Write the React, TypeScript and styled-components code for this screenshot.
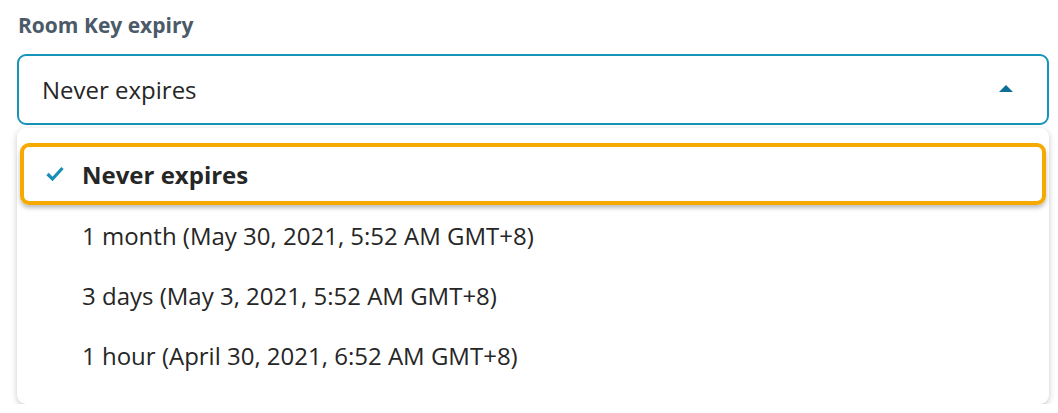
import React from "react";
import styled, { createGlobalStyle } from "styled-components";

const Global = createGlobalStyle`
  html, body { margin: 0; padding: 0; background: #fff; }
  body { font-family: "Open Sans", "Noto Sans", sans-serif; }
`;

const Page = styled.div`
  padding: 11px 9px 0 17px;
`;

const Label = styled.div`
  font-size: 21px;
  line-height: 28px;
  font-weight: 700;
  color: #4b5a68;
  padding-left: 1px;
  margin-bottom: 15px;
`;

const SelectBox = styled.div`
  box-sizing: border-box;
  height: 71px;
  border: 2px solid #1794ba;
  border-radius: 9px;
  display: flex;
  align-items: center;
  justify-content: space-between;
  padding: 0 34px 0 23px;
  font-size: 24px;
  color: #262626;
  background: #fff;
`;

const Caret = styled.span`
  width: 0;
  height: 0;
  border-left: 7px solid transparent;
  border-right: 7px solid transparent;
  border-bottom: 7px solid #0b6f96;
  margin-top: -2px;
`;

const Panel = styled.div`
  position: relative;
  margin-top: 3px;
  background: #fff;
  border-radius: 9px;
  box-shadow: 0 2px 6px rgba(0, 0, 0, 0.22);
  padding: 15px 3px 19px 3px;
`;

const Option = styled.div<{ $active?: boolean }>`
  box-sizing: border-box;
  height: ${(p) => (p.$active ? "62px" : "60px")};
  display: flex;
  align-items: center;
  padding-left: ${(p) => (p.$active ? "22px" : "62px")};
  font-size: 24px;
  color: #262626;
  font-weight: ${(p) => (p.$active ? 700 : 400)};
  border: ${(p) => (p.$active ? "4px solid #f6aa00" : "none")};
  border-radius: 9px;
  box-shadow: ${(p) => (p.$active ? "0 3px 4px rgba(0,0,0,0.25)" : "none")};
`;

const Check = styled.svg`
  width: 18px;
  height: 16px;
  margin-right: 18px;
  flex-shrink: 0;
`;

const options = [
  "1 month (May 30, 2021, 5:52 AM GMT+8)",
  "3 days (May 3, 2021, 5:52 AM GMT+8)",
  "1 hour (April 30, 2021, 6:52 AM GMT+8)",
];

export default function App() {
  return (
    <>
      <Global />
      <Page>
        <Label>Room Key expiry</Label>
        <SelectBox>
          <span>Never expires</span>
          <Caret />
        </SelectBox>
        <Panel>
          <Option $active>
            <Check viewBox="0 0 18 16">
              <polyline points="1.5,8 6.5,13 16.5,2" fill="none" stroke="#1a8fb5" strokeWidth="3.2" />
            </Check>
            Never expires
          </Option>
          {options.map((o) => (
            <Option key={o}>{o}</Option>
          ))}
        </Panel>
      </Page>
    </>
  );
}
